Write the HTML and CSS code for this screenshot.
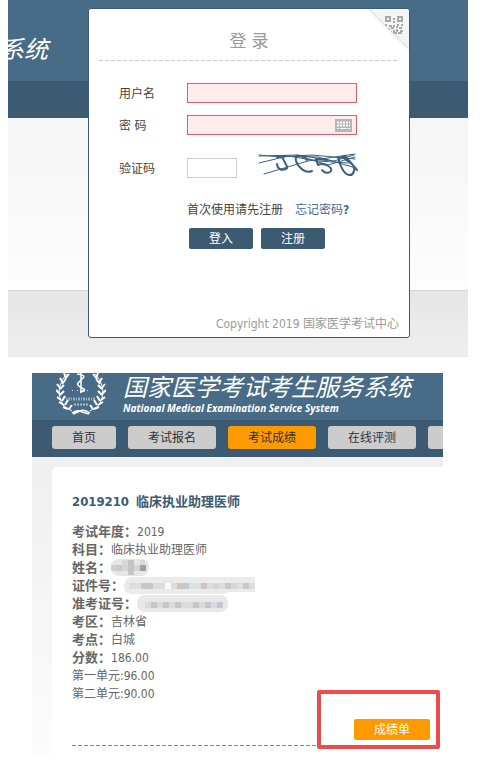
FILE: index.html
```html
<!DOCTYPE html>
<html lang="zh-CN">
<head>
<meta charset="utf-8">
<title>国家医学考试考生服务系统</title>
<link rel="stylesheet" href="styles.css">
</head>
<body>
<section class="shot login-shot">
  <div class="login-back">
    <div class="login-head"><span>系统</span></div>
    <div class="login-bar"></div>
    <div class="login-body"></div>
    <div class="login-foot"></div>
  </div>
  <form class="card">
    <svg class="qr" viewBox="0 0 44 40" aria-hidden="true">
      <defs>
        <clipPath id="fold"><path d="M4 0H44V40Z"/></clipPath>
      </defs>
      <path d="M1 0H4L44 40V43Z" fill="#f8f8f8"/>
      <path d="M4 0H41Q44 0 44 3V40Z" fill="#f5f5f5"/>
      <path d="M4 0L44 40" stroke="#e6e6e6" stroke-width="1.5"/>
      <g clip-path="url(#fold)" fill="none" stroke="#a8a8a8" stroke-width="2">
        <path d="M21 8h4v4h-4zM33 8h4v4h-4z"/>
        <path d="M29 9v2M29 12v2M20 16h2M24 17h3M28 17h2M32 16h2M36 16h2M26 19h3M31 18h2M34 19h3M23 20h2M29 21v3M32 20v3M35 22h3M24 23h3M29 24h3M33 24h4"/>
      </g>
    </svg>
    <h1 class="card-title">登 录</h1>
    <div class="fields">
      <label for="user">用户名</label>
      <div class="box"><input id="user" class="required" type="text"></div>
      <label for="pass">密 码</label>
      <div class="box">
        <input id="pass" class="required" type="password">
        <svg class="keyboard" viewBox="0 0 17 13" aria-hidden="true">
          <rect width="17" height="13" fill="#b5b5b5"/>
          <path d="M2 3.5h13M2 6.5h13" stroke="#fff" stroke-width="2" stroke-dasharray="2 1"/>
          <path d="M2 9.500h2M5 9.500h7M13 9.500h2" stroke="#fff" stroke-width="1"/>
        </svg>
      </div>
      <label class="code-label" for="code">验证码</label>
      <div class="code-box">
        <input id="code" type="text">
        <svg class="captcha" viewBox="0 0 102 26" role="img" aria-label="验证码图片">
          <g fill="none" stroke="#3c5f7e" stroke-linecap="round" stroke-linejoin="round">
            <path stroke-width="1" d="M1 4L22 6L54 4L97 8M1 5L40 4L76 10L96 4M1 12L30 5L60 10L90 12M6 23L50 10L97 3M20 5L60 6L98 17M38 4L70 14L97 6"/>
            <path stroke-width="2" d="M19 6L27 5M24 6C27 12 31 17 28 18S20 20 19 13M49 9C44 3 36 4 38 10S47 23 54 20M69 9L58 8L60 14C67 11 75 17 73 20S66 22 64 19M80 6C82 14 86 23 91 24S98 17 94 13L84 6M80 7L87 5L99 19"/>
          </g>
        </svg>
      </div>
    </div>
    <p class="hint"><span>首次使用请先注册</span><a href="#">忘记密码<b>?</b></a></p>
    <div class="actions">
      <button type="button">登入</button>
      <button type="button">注册</button>
    </div>
    <p class="copyright">Copyright 2019 国家医学考试中心</p>
  </form>
</section>

<section class="shot score-shot">
  <header class="brand">
    <svg class="emblem" viewBox="0 0 50 42" aria-hidden="true">
      <g fill="none" stroke="#fff">
        <path d="M11 1C2 10 0 24 9 34L16 38M39 1C48 10 50 24 41 34L34 38" stroke-width="1"/>
        <path d="M8 0l2 5M13 1l-4 5M4 5l3 5M10 6l-4 5M1 11l4 5M8 12l-4 4M0 17l4 4M8 18l-4 4M1 24l4 3M9 23l-3 5M3 29l5 3M12 27l-3 5M7 34l5 2M16 32l-3 4M42 0l-2 5M37 1l4 5M46 5l-3 5M40 6l4 5M49 11l-4 5M42 12l4 4M50 17l-4 4M42 18l4 4M49 24l-4 3M41 23l3 5M47 29l-5 3M38 27l3 5M43 34l-5 2M34 32l3 4" stroke-width="2"/>
        <path d="M16 40Q22 36 26 39L33 41M34 40Q28 36 24 38L17 41" stroke-width="1.500"/>
        <path d="M25 0v20M21 1q9 1 6 4t-5 5 4 5-2 4" stroke-width="1.500"/>
      </g>
      <g stroke="#dbe4ea">
        <path d="M16 17.500h18" stroke-width="1" stroke-dasharray="1 4"/>
        <path d="M10 26h30" stroke-width="3" stroke-dasharray="1 1 2 1" opacity=".55"/>
        <path d="M18 31.500h14" stroke-width="2" stroke-dasharray="2 1" opacity=".7"/>
      </g>
    </svg>
    <div class="brand-text">
      <h2>国家医学考试考生服务系统</h2>
      <p>National Medical Examination Service System</p>
    </div>
  </header>
  <nav class="menu">
    <a class="short" href="#">首页</a>
    <a href="#">考试报名</a>
    <a class="current" href="#">考试成绩</a>
    <a href="#">在线评测</a>
    <a href="#" aria-label="更多"></a>
  </nav>
  <main class="score-body">
    <article class="panel">
      <h3><span>2019210</span>临床执业助理医师</h3>
      <dl>
        <div><dt>考试年度：</dt><dd>2019</dd></div>
        <div><dt>科目：</dt><dd>临床执业助理医师</dd></div>
        <div><dt>姓名：</dt><dd><svg class="mosaic name" viewBox="0 0 38 17" aria-hidden="true"><rect width="38" height="17" rx="8" fill="#e6e6e6"/><path d="M0 6h5v6H0z" fill="#d0d0d0"/><path d="M5 6h6v6H5z" fill="#c9c9c9"/><path d="M11 6h6v6h-6z" fill="#d6d6d6"/><path d="M17 1h6v15h-6z" fill="#c4c4c4"/><path d="M23 6h6v6h-6z" fill="#d4d4d4"/><path d="M29 6h6v6h-6z" fill="#a0a0a0"/><path d="M11 1h6v5h-6zM29 1h5v5h-5z" fill="#d8d8d8"/></svg></dd></div>
        <div><dt>证件号：</dt><dd><svg class="mosaic ident" viewBox="0 0 131 17" aria-hidden="true"><path d="M8 0h123v15h-24l-9 2H8Q0 17 0 9T8 0z" fill="#ebebeb"/><path d="M5 6h126v6H5z" fill="#dedede"/><path d="M17 6h6v6h-6zM59 6h6v6h-6zM101 6h6v6h-6zM119 6h6v6h-6z" fill="#c2c7d2"/><path d="M23 6h6v6h-6zM53 6h6v6h-6zM77 6h6v6h-6z" fill="#cfc4c2"/><path d="M41 6h6v6h-6z" fill="#f4fff2"/><path d="M89 6h6v6h-6zM107 6h6v6h-6z" fill="#d4d8d4"/></svg></dd></div>
        <div><dt>准考证号：</dt><dd><svg class="mosaic exam" viewBox="0 0 91 17" aria-hidden="true"><rect width="91" height="17" rx="8" fill="#e8e8e8"/><path d="M8 7h78v6H8z" fill="#dadada"/><path d="M14 7h6v6h-6zM26 7h6v6h-6zM56 7h6v6h-6z" fill="#cdc2c4"/><path d="M38 7h6v6h-6zM68 7h6v6h-6zM80 7h6v6h-6z" fill="#c2c6cf"/></svg></dd></div>
        <div><dt>考区：</dt><dd>吉林省</dd></div>
        <div><dt>考点：</dt><dd>白城</dd></div>
        <div><dt>分数：</dt><dd>186.00</dd></div>
      </dl>
      <p>第一单元:96.00</p>
      <p>第二单元:90.00</p>
      <div class="panel-end">
        <button type="button">成绩单</button>
      </div>
    </article>
  </main>
</section>
</body>
</html>
```

FILE: styles.css
```css
*, *::before, *::after { box-sizing: border-box; margin: 0; padding: 0; }

body {
  background: #fff;
  color: #444;
  font: 12px/18px "DejaVu Sans Condensed", "Noto Sans", "Noto Sans CJK SC", sans-serif;
}

a { text-decoration: none; }

button, input { font: inherit; }

.shot { overflow: hidden; }

/* Login */
.login-shot {
  display: grid;
  margin: 0 14px 0 8px;
}

.login-back, .card { grid-area: 1 / 1; }

.login-back {
  display: grid;
  grid-template-rows: 81px 37px 1fr 67px;
}

.login-head {
  background: #486c88;
  color: #fff;
  font-size: 24px;
  font-style: italic;
  line-height: 36px;
  padding-top: 32px;
}

.login-head span { margin-left: -8px; }

.login-bar { background: #3c5a72; }

.login-body { background: linear-gradient(#f5f5f5, #fdfdfd); }

.login-foot {
  background: linear-gradient(#e6e6e6, #eee);
  border-top: 1px solid #d6d6d6;
}

.card {
  position: relative;
  margin: 8px 58px 19px 80px;
  padding: 0 10px;
  background: #fff;
  border: 1px solid #3a5c77;
  border-radius: 3px;
}

.qr {
  position: absolute;
  top: 0;
  right: 0;
  width: 44px;
  height: 40px;
}

.card-title {
  padding: 20px 0 0;
  color: #999;
  font-size: 17px;
  font-weight: 400;
  line-height: 24px;
  text-align: center;
}

.card-title::after, .panel-end::after {
  content: "";
  display: block;
  height: 1px;
  background: repeating-linear-gradient(90deg, #ccc 0 4px, transparent 4px 6px);
}

.card-title::after { margin-top: 7px; }

.fields {
  display: grid;
  grid-template-columns: 68px minmax(0, 1fr);
  row-gap: 12px;
  padding: 22px 42px 0 20px;
}

.fields label { line-height: 22px; }

.box, .fields label { height: 20px; }

.box { position: relative; }

.fields input {
  display: block;
  width: 100%;
  height: 20px;
  border: 1px solid #ccc;
  background: #fff;
  outline: 0;
}

.fields .required {
  border-color: #e35d62;
  background: #ffecec;
}

.keyboard {
  position: absolute;
  top: 4px;
  right: 5px;
  width: 17px;
  height: 13px;
}

.fields .code-label { padding-top: 11px; }

.code-box { display: flex; gap: 21px; padding-top: 4px; }

.fields .code-box input { flex: none; width: 50px; margin-top: 7px; }

.captcha { flex: none; width: 102px; height: 26px; }

.hint {
  display: flex;
  gap: 12px;
  padding: 23px 0 0 88px;
}

.hint a { color: #3c6e96; }

.actions {
  display: flex;
  gap: 8px;
  padding: 9px 0 0 90px;
}

.actions button, .panel-end button {
  width: 64px;
  height: 21px;
  border: 0;
  border-radius: 2px;
  background: #3c5a72;
  color: #fff;
}

.copyright {
  padding: 66px 0 4px;
  color: #999;
  text-align: right;
}

/* Scores */
.score-shot {
  margin: 16px 39px 16px 32px;
}

.brand {
  display: flex;
  gap: 17px;
  height: 47px;
  padding-left: 24px;
  background: #486c88;
  color: #fff;
}

.emblem { width: 50px; height: 42px; }

.brand-text { white-space: nowrap; font-style: italic; }

.brand h2 {
  font-size: 24px;
  font-weight: 400;
  line-height: 30px;
}

.brand p {
  font-family: "Open Sans", "Noto Sans", sans-serif;
  font-size: 10px;
  font-weight: 700;
  line-height: 10px;
}

.menu {
  display: flex;
  gap: 12px;
  padding: 6px 0 8px 20px;
  background: #3c5a72;
}

.menu a {
  flex: none;
  width: 88px;
  height: 23px;
  border-radius: 3px;
  background: #ccc;
  color: #333;
  line-height: 25px;
  text-align: center;
}

.menu .short { width: 64px; }

.menu .current { background: #f90; }

.score-body {
  padding: 10px 0 0 20px;
  background: linear-gradient(#efefef, #fcfcfc);
}

.panel {
  padding: 25px 13px 8px 20px;
  border-radius: 5px 0 0 0;
  background: #fff;
  color: #666;
}

.panel h3 {
  display: flex;
  gap: 7px;
  margin-bottom: 11px;
  color: #3c5a72;
  font-size: 13px;
  line-height: 20px;
}

.panel dl > div { display: flex; height: 18px; }

.panel dt { font-size: 13px; font-weight: 700; }

.mosaic { display: block; height: 17px; }

.name { width: 38px; }

.ident { width: 131px; }

.exam { width: 91px; }

.panel-end {
  position: relative;
  padding-top: 16px;
  text-align: right;
}

.panel-end button {
  display: block;
  width: 76px;
  margin: 0 0 5px auto;
  background: #f90;
}

.panel-end::after {
  background: repeating-linear-gradient(90deg, #888 0 4px, transparent 4px 6px);
}

.panel-end::before {
  content: "";
  position: absolute;
  top: -13px;
  right: -10px;
  bottom: -3px;
  width: 123px;
  border: 4px solid #ee4b4b;
  border-radius: 2px;
}
```
